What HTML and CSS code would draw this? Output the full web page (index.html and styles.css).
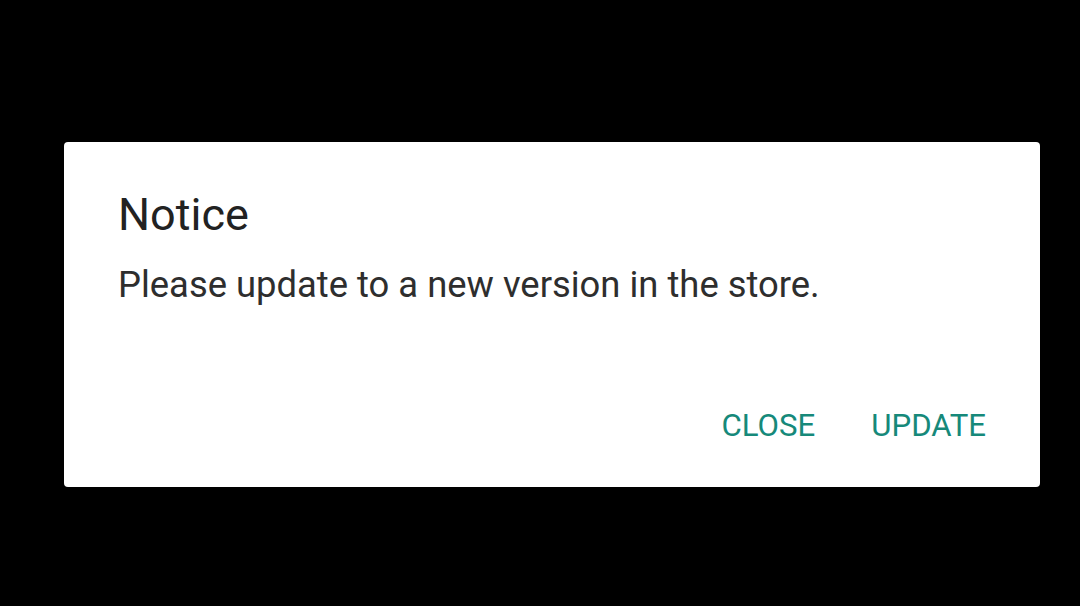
FILE: index.html
```html
<!DOCTYPE html>
<html lang="en">
<head>
    <meta charset="UTF-8">
    <meta name="viewport" content="width=device-width, initial-scale=1.0">
    <title>Notice</title>
    <link rel="stylesheet" href="styles.css">
</head>
<body>

    <div class="overlay">
        <div class="dialog">
            <h2 class="dialog-title">Notice</h2>
            <p class="dialog-message">Please update to a new version in the store.</p>

            <div class="dialog-actions">
                <button type="button" class="dialog-btn">CLOSE</button>
                <button type="button" class="dialog-btn">UPDATE</button>
            </div>
        </div>
    </div>

</body>
</html>
```

FILE: styles.css
```css
body {
    font-family: Roboto, "Noto Sans", Arial, sans-serif;
    background-color: #000;
    margin: 0;
    height: 606px;
}

.overlay {
    padding: 142px 0 0 64px;
}

.dialog {
    background-color: #fff;
    border-radius: 4px;
    width: 976px;
    height: 345px;
    box-sizing: border-box;
    padding: 0 54px;
    display: flex;
    flex-direction: column;
}

.dialog-title {
    font-size: 45px;
    font-weight: 400;
    color: #222;
    margin: 47px 0 0 0;
    line-height: 52px;
}

.dialog-message {
    font-size: 36.4px;
    color: #2e2e2e;
    margin: 22px 0 0 0;
    line-height: 44px;
}

.dialog-actions {
    display: flex;
    justify-content: flex-end;
    gap: 56px;
    margin-top: auto;
    margin-bottom: 41px;
}

.dialog-btn {
    background: none;
    border: none;
    padding: 0;
    font-family: inherit;
    font-size: 31.2px;
    color: #16897a;
    line-height: 40px;
    cursor: pointer;
}
```
